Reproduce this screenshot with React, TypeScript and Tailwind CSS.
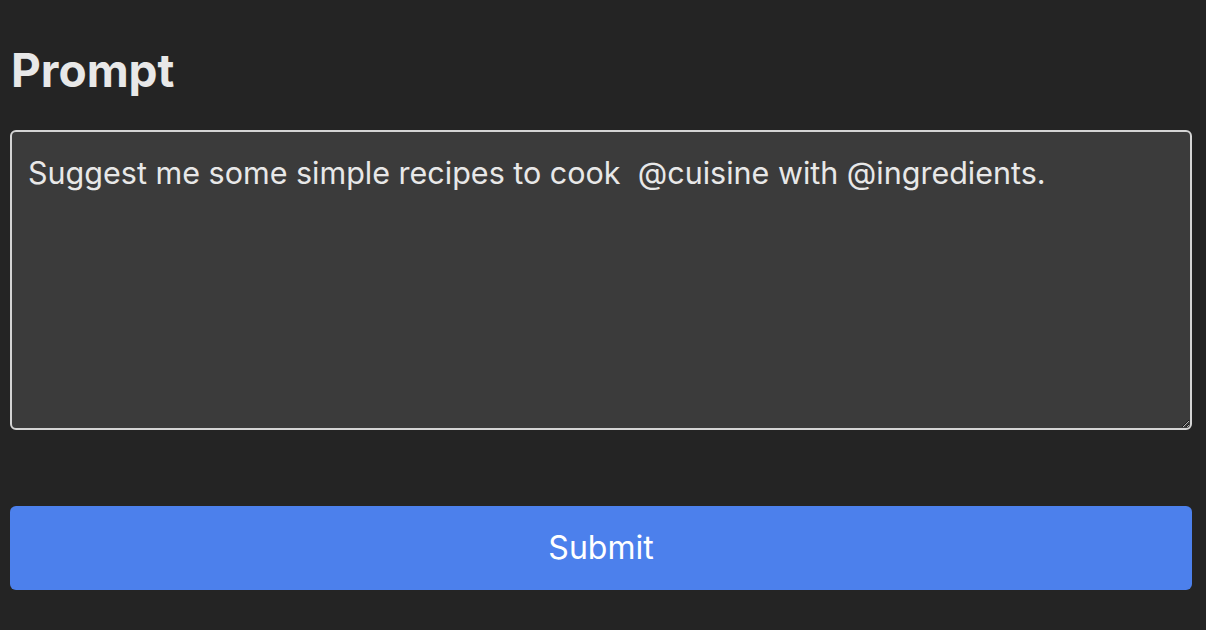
import React, { useState } from 'react';

const App: React.FC = () => {
  const [prompt, setPrompt] = useState('Suggest me some simple recipes to cook  @cuisine with @ingredients.');

  return (
    <div className="min-h-screen bg-[#242424] pl-[10px] pr-[14px] pt-[40px] font-['Inter','Noto_Sans',sans-serif] text-[#e8e8e8]">
      <h2 className="ml-[1px] text-[46px] font-bold leading-[60px]">Prompt</h2>
      <form
        className="mt-[30px] flex flex-col"
        onSubmit={e => e.preventDefault()}
      >
        <textarea
          value={prompt}
          onChange={e => setPrompt(e.target.value)}
          className="h-[300px] w-full rounded-[6px] border-2 border-[#d4d4d4] bg-[#3b3b3b] px-4 pt-[21px] pb-4 text-[30.5px] leading-[40px] text-[#e8e8e8] outline-none"
        />
        <button
          type="submit"
          className="mt-[76px] h-[84px] w-full rounded-[6px] bg-[#4c80ec] text-[32px] text-white"
        >
          Submit
        </button>
      </form>
    </div>
  );
};

export default App;
